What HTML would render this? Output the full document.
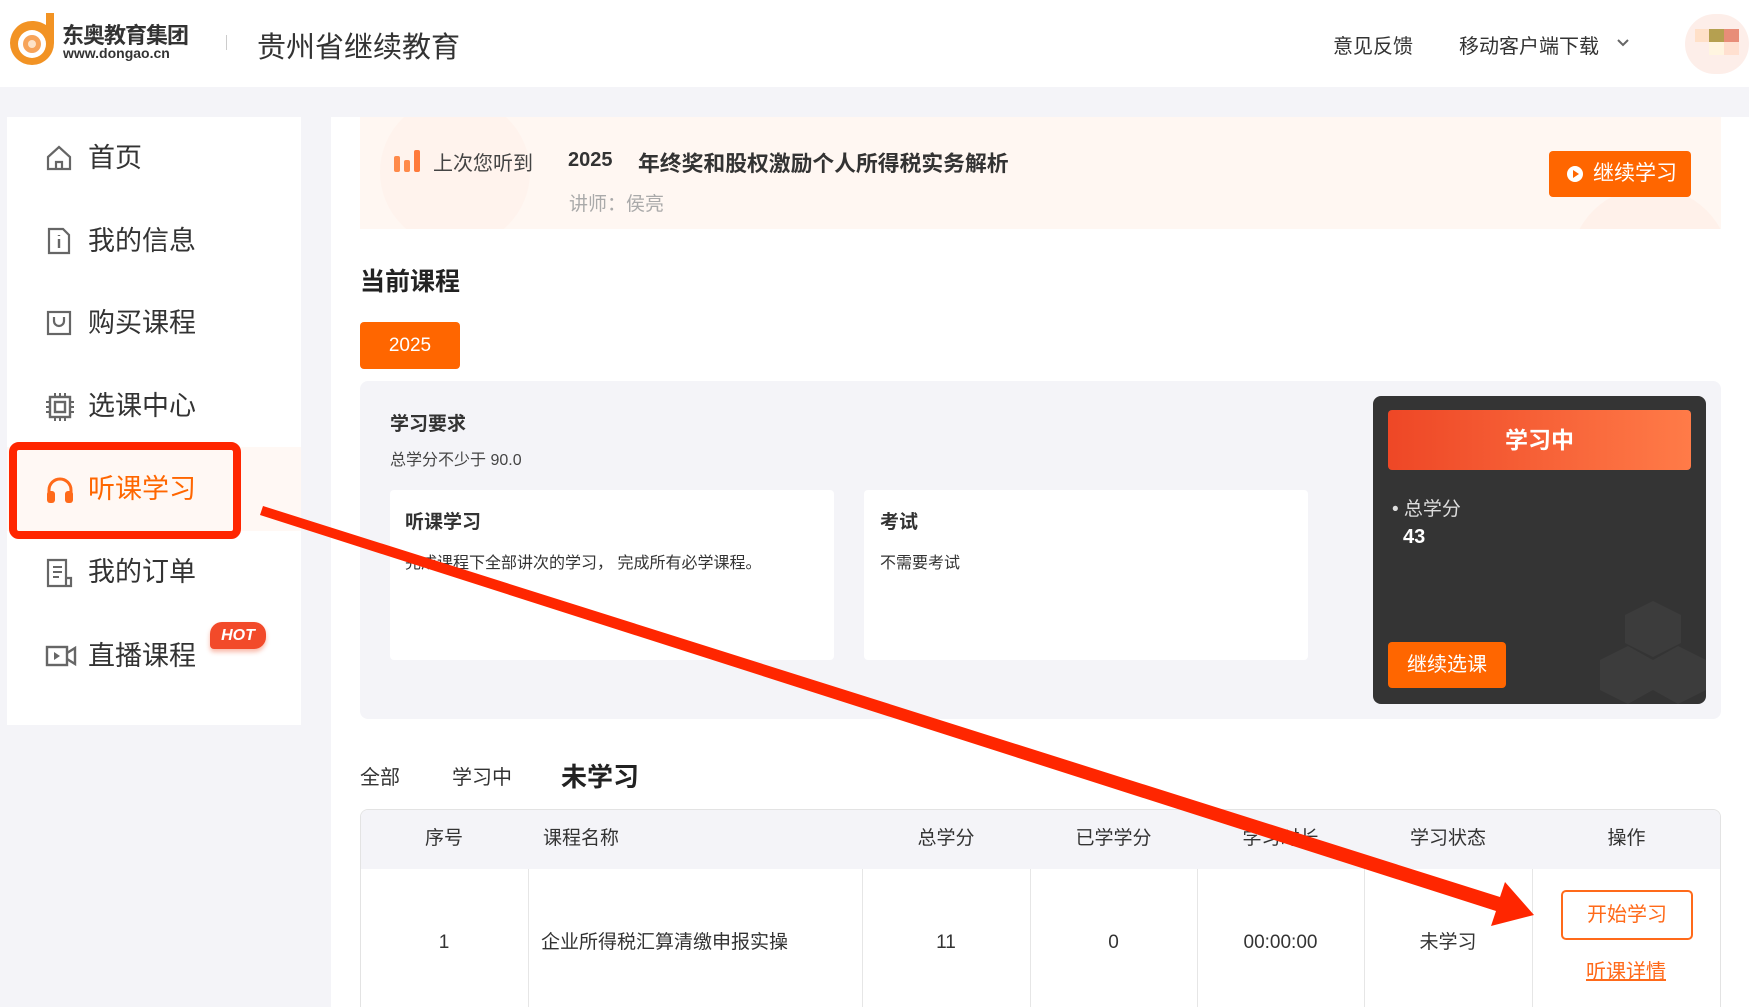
<!DOCTYPE html>
<html><head><meta charset="utf-8"><style>
*{margin:0;padding:0;box-sizing:border-box}
html,body{width:1749px;height:1007px;overflow:hidden}
body{background:#f4f4f8;font-family:"Liberation Sans","Noto Sans CJK SC",sans-serif;color:#333;position:relative}
.a{position:absolute;white-space:nowrap}
.hdr{position:absolute;left:0;top:0;width:1749px;height:87px;background:#fff}
.side{position:absolute;left:7px;top:117px;width:294px;height:608px;background:#fff}
.item{position:absolute;left:0;width:294px;height:40px;font-size:27px;line-height:40px;color:#333}
.item svg{position:absolute;left:38px;top:6px}
.item span{position:absolute;left:81px;top:0}
.main{position:absolute;left:331px;top:117px;width:1418px;height:890px;background:#fff}
.cell{position:absolute;top:0;height:100%;border-left:1px solid #e6e6e6}
.th{position:absolute;top:809px;height:59px;line-height:59px;font-size:19px;color:#333;text-align:center}
.td{position:absolute;top:923px;line-height:40px;font-size:19px;color:#333;text-align:center}
</style></head><body>
<div class="hdr">
 <svg class="a" style="left:6px;top:11px" width="62" height="58" viewBox="0 0 62 58"><path d="M40 2h8v30a22 22 0 1 1-22-22c5 0 9 1 14 4z" fill="#f29324"/><circle cx="26" cy="33" r="14" fill="#fff"/><circle cx="26" cy="33" r="9" fill="#f7a45a"/><circle cx="26" cy="33" r="4" fill="#fde3c8"/></svg>
 <div class="a" style="left:62px;top:18px;font-size:22px;font-weight:bold;color:#333;letter-spacing:-1px">东奥教育集团</div>
 <div class="a" style="left:63px;top:45px;font-size:14px;font-weight:bold;color:#333">www.dongao.cn</div>
 <div class="a" style="left:226px;top:35px;width:1px;height:15px;background:#ccc"></div>
 <div class="a" style="left:257px;top:24px;font-size:29px;color:#333">贵州省继续教育</div>
 <div class="a" style="left:1333px;top:30px;font-size:20px;color:#333">意见反馈</div>
 <div class="a" style="left:1459px;top:30px;font-size:20px;color:#333">移动客户端下载</div>
 <svg class="a" style="left:1617px;top:38px" width="12" height="9"><path d="M1 2l5 5 5-5" stroke="#666" stroke-width="2" fill="none"/></svg>
 <div class="a" style="left:1685px;top:14px;width:64px;height:60px;border-radius:32px;background:#fdeee9;overflow:hidden">
  <div class="a" style="left:10px;top:15px;width:14px;height:13px;background:#ffe0c8"></div>
  <div class="a" style="left:24px;top:15px;width:15px;height:13px;background:#b5a050"></div>
  <div class="a" style="left:39px;top:15px;width:15px;height:13px;background:#e88d78"></div>
  <div class="a" style="left:24px;top:28px;width:15px;height:13px;background:#fff5e0"></div>
  <div class="a" style="left:39px;top:28px;width:15px;height:13px;background:#ffe0d0"></div>
 </div>
</div>

<div class="side">
 <div class="item" style="top:21px"><svg width="28" height="28" viewBox="0 0 28 28"><path d="M3 13L14 3l11 10v12H3z M11 25v-7h6v7" stroke="#666" stroke-width="2.2" fill="none"/></svg><span>首页</span></div>
 <div class="item" style="top:104px"><svg width="28" height="28" viewBox="0 0 28 28"><path d="M4 2h14l6 6v18H4z" stroke="#666" stroke-width="2.2" fill="none"/><path d="M14 12v9M14 8v1" stroke="#666" stroke-width="2.4"/></svg><span>我的信息</span></div>
 <div class="item" style="top:186px"><svg width="28" height="28" viewBox="0 0 28 28"><rect x="3" y="3" width="22" height="22" stroke="#666" stroke-width="2.2" fill="none"/><path d="M9 8v4a5 5 0 0 0 10 0V8" stroke="#666" stroke-width="2.2" fill="none"/></svg><span>购买课程</span></div>
 <div class="item" style="top:269px"><svg width="30" height="30" viewBox="0 0 30 30"><rect x="5" y="5" width="20" height="20" stroke="#666" stroke-width="2.4" fill="none"/><rect x="10" y="10" width="10" height="10" stroke="#666" stroke-width="2.4" fill="none"/><path d="M10 1v4M15 1v4M20 1v4M10 25v4M15 25v4M20 25v4M1 10h4M1 15h4M1 20h4M25 10h4M25 15h4M25 20h4" stroke="#666" stroke-width="2"/></svg><span>选课中心</span></div>
 <div style="position:absolute;left:0;top:330px;width:294px;height:84px;background:#fff8f4"></div>
 <div class="item" style="top:352px;color:#ff6600"><svg width="30" height="30" viewBox="0 0 30 30"><path d="M4 20v-5a11 11 0 0 1 22 0v5" stroke="#ff6a1a" stroke-width="3" fill="none"/><rect x="2" y="16" width="8" height="12" rx="3" fill="#ff6a1a"/><rect x="20" y="16" width="8" height="12" rx="3" fill="#ff6a1a"/></svg><span>听课学习</span></div>
 <div class="item" style="top:435px"><svg width="30" height="30" viewBox="0 0 30 30"><path d="M3 2h18v26H3z M21 20h5v8H8" stroke="#666" stroke-width="2.2" fill="none"/><path d="M8 9h9M8 14h9M8 19h6" stroke="#666" stroke-width="2"/></svg><span>我的订单</span></div>
 <div class="item" style="top:519px"><svg width="32" height="28" viewBox="0 0 32 28"><rect x="2" y="5" width="20" height="18" stroke="#666" stroke-width="2.4" fill="none"/><path d="M9 10v8l6-4z" fill="#666"/><path d="M22 11l8-5v16l-8-5" stroke="#666" stroke-width="2.4" fill="none"/></svg><span>直播课程</span></div>
 <div class="a" style="left:203px;top:505px;width:56px;height:27px;border-radius:12px 12px 12px 4px;background:#f24a2a;color:#fff;font-size:16px;font-weight:bold;font-style:italic;text-align:center;line-height:27px;box-shadow:0 3px 5px rgba(240,80,40,.4)">HOT</div>
</div>
<div class="a" style="left:9px;top:442px;width:232px;height:97px;border:8px solid #ff2600;border-radius:10px"></div>

<div class="main"></div>
<div class="a" style="left:360px;top:117px;width:1361px;height:112px;background:#fff7f2;overflow:hidden">
 <div class="a" style="left:1210px;top:70px;width:160px;height:160px;border-radius:80px;background:#fff1ea"></div>
 <div class="a" style="left:20px;top:-20px;width:150px;height:150px;border-radius:75px;background:#fff3ed"></div>
</div>
<svg class="a" style="left:393px;top:148px" width="28" height="24"><rect x="1" y="8" width="6" height="16" rx="2" fill="#ff8a4a"/><rect x="11" y="12" width="6" height="12" rx="2" fill="#ff8a4a"/><rect x="21" y="2" width="6" height="22" rx="2" fill="#ff7a3a"/></svg>
<div class="a" style="left:433px;top:147px;font-size:20px;color:#444">上次您听到</div>
<div class="a" style="left:568px;top:149px;font-size:20px;font-weight:bold;color:#333">2025</div>
<div class="a" style="left:638px;top:147px;font-size:21.8px;font-weight:bold;color:#333">年终奖和股权激励个人所得税实务解析</div>
<div class="a" style="left:569px;top:189px;font-size:19px;color:#aaa">讲师：侯亮</div>
<div class="a" style="left:1549px;top:151px;width:142px;height:46px;background:#ff6600;border-radius:4px;color:#fff;font-size:21px;line-height:46px;padding-left:44px">继续学习</div>
<svg class="a" style="left:1566px;top:165px" width="18" height="18"><circle cx="9" cy="9" r="8" fill="#fff"/><path d="M7 5v8l6-4z" fill="#ff6600"/></svg>

<div class="a" style="left:360px;top:262px;font-size:25px;font-weight:bold;color:#222">当前课程</div>
<div class="a" style="left:360px;top:322px;width:100px;height:47px;background:#ff6600;border-radius:4px;color:#fff;font-size:19px;line-height:47px;text-align:center">2025</div>

<div class="a" style="left:360px;top:381px;width:1361px;height:338px;background:#f4f4f8;border-radius:8px"></div>
<div class="a" style="left:390px;top:409px;font-size:19px;font-weight:bold;color:#333">学习要求</div>
<div class="a" style="left:390px;top:446px;font-size:16px;color:#444">总学分不少于 90.0</div>
<div class="a" style="left:390px;top:490px;width:444px;height:170px;background:#fff;border-radius:4px"></div>
<div class="a" style="left:864px;top:490px;width:444px;height:170px;background:#fff;border-radius:4px"></div>
<div class="a" style="left:405px;top:507px;font-size:19px;font-weight:bold;color:#333">听课学习</div>
<div class="a" style="left:405px;top:549px;font-size:16px;color:#333">完成课程下全部讲次的学习， 完成所有必学课程。</div>
<div class="a" style="left:880px;top:507px;font-size:19px;font-weight:bold;color:#333">考试</div>
<div class="a" style="left:880px;top:549px;font-size:16px;color:#333">不需要考试</div>

<div class="a" style="left:1373px;top:396px;width:333px;height:308px;background:#343434;border-radius:8px;overflow:hidden">
 <svg class="a" style="left:225px;top:200px" width="110" height="110"><path d="M55 5l28 14v28L55 61 27 47V19z M30 50l25 14v30L30 108 2 94V64z M80 50l28 14v30L80 108 55 94V64z" fill="#3c3c3c"/></svg>
</div>
<div class="a" style="left:1388px;top:410px;width:303px;height:60px;border-radius:4px;background:linear-gradient(90deg,#ee4726,#ff7b48);color:#fff;font-size:23px;font-weight:bold;text-align:center;line-height:60px">学习中</div>
<div class="a" style="left:1392px;top:494px;font-size:19px;color:#ddd">• 总学分</div>
<div class="a" style="left:1403px;top:526px;font-size:20px;font-weight:bold;color:#fff">43</div>
<div class="a" style="left:1388px;top:642px;width:118px;height:46px;background:#ff6600;border-radius:4px;color:#fff;font-size:20px;line-height:46px;text-align:center">继续选课</div>

<div class="a" style="left:360px;top:761px;font-size:20px;color:#333">全部</div>
<div class="a" style="left:452px;top:761px;font-size:20px;color:#333">学习中</div>
<div class="a" style="left:561px;top:757px;font-size:26px;font-weight:bold;color:#222">未学习</div>

<div class="a" style="left:360px;top:809px;width:1361px;height:198px;border:1px solid #e3e3e3;border-bottom:none;border-radius:8px 8px 0 0;overflow:hidden">
 <div class="a" style="left:0;top:0;width:100%;height:59px;background:#f4f4f8"></div>
 <div class="cell" style="left:167px;top:59px"></div>
 <div class="cell" style="left:501px;top:59px"></div>
 <div class="cell" style="left:669px;top:59px"></div>
 <div class="cell" style="left:836px;top:59px"></div>
 <div class="cell" style="left:1003px;top:59px"></div>
 <div class="cell" style="left:1171px;top:59px"></div>
</div>
<div class="th" style="left:360px;width:168px">序号</div>
<div class="th" style="left:543px">课程名称</div>
<div class="th" style="left:862px;width:168px">总学分</div>
<div class="th" style="left:1030px;width:167px">已学学分</div>
<div class="th" style="left:1197px;width:167px">学习时长</div>
<div class="th" style="left:1364px;width:168px">学习状态</div>
<div class="th" style="left:1532px;width:189px">操作</div>
<div class="td" style="left:360px;width:168px">1</div>
<div class="td" style="left:541px">企业所得税汇算清缴申报实操</div>
<div class="td" style="left:862px;width:168px">11</div>
<div class="td" style="left:1030px;width:167px">0</div>
<div class="td" style="left:1197px;width:167px">00:00:00</div>
<div class="td" style="left:1364px;width:168px">未学习</div>
<div class="a" style="left:1561px;top:890px;width:132px;height:50px;border:2px solid #ff6a1a;border-radius:5px;color:#ff6a1a;font-size:20px;line-height:46px;text-align:center">开始学习</div>
<div class="a" style="left:1586px;top:955px;font-size:20px;color:#ff6a1a;text-decoration:underline">听课详情</div>

<svg class="a" style="left:0;top:0" width="1749" height="1007"><polygon points="263,506 1500,897 1505,882 1534,915 1491,926 1496,911 260,515" fill="#ff2600"/></svg>
</body></html>
